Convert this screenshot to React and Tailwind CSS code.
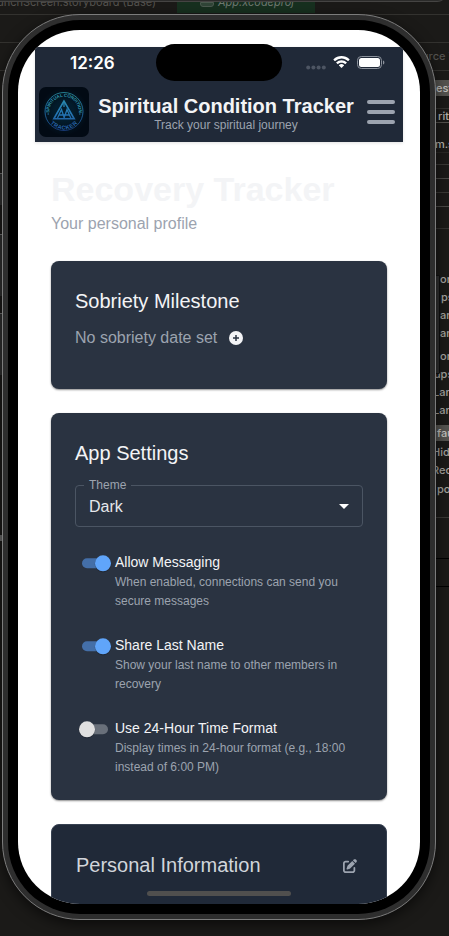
import { FaPenToSquare } from "react-icons/fa6";

const inspectorLines = [
  "top-[42px] bg-[#33322f]",
  "top-[70px] bg-[#33322f]",
  "top-[108px] bg-[#33322f]",
  "top-[122px] bg-[#55534f]",
  "top-[152px] bg-[#2a2926]",
  "top-[164px] bg-[#3a3936]",
  "top-[178px] bg-[#4a4946]",
  "top-[192px] bg-[#3a3936]",
  "top-[206px] bg-[#4a4946]",
  "top-[228px] bg-[#333230]",
  "top-[517px] bg-[#3a3936]",
  "top-[558px] bg-[#000000]",
  "top-[586px] bg-[#000000]",
];

const inspectorLabels = [
  ["urce T", "top-[48px] left-[422px] text-[#55534f]"],
  ["est", "top-[80px] left-[435px] w-[30px] bg-[#555450] pl-px text-[#c4c3c0]"],
  ["rit", "top-[108px] left-[438px] text-[#b5b4b0]"],
  ["m.s", "top-[136px] left-[435px] text-[#b5b4b0]"],
  ["on", "top-[271px] left-[440px] text-[#a5a4a0]"],
  ["ps", "top-[289px] left-[441px] text-[#a5a4a0]"],
  ["an", "top-[307px] left-[440px] text-[#a5a4a0]"],
  ["an", "top-[325px] left-[440px] text-[#a5a4a0]"],
  ["on", "top-[348px] left-[440px] text-[#a5a4a0]"],
  ["ups", "top-[366px] left-[434px] text-[#a5a4a0]"],
  ["Lan", "top-[384px] left-[433px] text-[#a5a4a0]"],
  ["Lan", "top-[402px] left-[433px] text-[#a5a4a0]"],
  ["fau", "top-[425px] left-[435px] w-[30px] bg-[#555450] pl-[2px] text-[#c4c3c0]"],
  ["Hid", "top-[444px] left-[432px] text-[#a5a4a0]"],
  ["Rec", "top-[462px] left-[432px] text-[#a5a4a0]"],
  ["po", "top-[481px] left-[437px] text-[#a5a4a0]"],
];

function Desktop() {
  return (
    <div className="absolute inset-0 overflow-hidden bg-[#1b1a18] font-['Inter',sans-serif]">
      {inspectorLines.map((c) => (
        <div key={c} className={`absolute right-0 h-px w-[60px] ${c}`} />
      ))}
      <div className="absolute top-[14px] left-0 h-px w-full bg-[#33322f]" />
      <div className="absolute top-[42px] left-0 h-px w-[40px] bg-[#33322f]" />
      <div className="absolute top-[70px] left-0 h-px w-[20px] bg-[#33322f]" />
      <div className="absolute top-0 left-[177px] h-[13px] w-[138px] bg-[#17301f]" />
      <div className="absolute top-[2px] left-[200px] h-[5px] w-[14px] rounded-b-[3px] border border-[#4b5a4f] bg-[#304537]" />
      <div className="absolute -top-[5px] -left-[9px] text-[11px] leading-[15px] whitespace-nowrap text-[#55534f]">
        aunchScreen.storyboard (Base)
      </div>
      <div className="absolute -top-[5px] left-[218px] text-[11px] leading-[15px] whitespace-nowrap text-[#6c776f] italic">App.xcodeproj</div>
      <div className="absolute -top-[8px] -left-[10px] h-[10px] w-[457px] rounded-b-[10px] border-b border-[#454443] bg-[#2b2b2a]" />
      {inspectorLabels.map(([t, c]) => (
        <div key={c} className={`absolute text-[11px] leading-[16px] font-medium whitespace-nowrap ${c}`}>
          {t}
        </div>
      ))}
      <div className="absolute top-[535px] left-0 h-[6px] w-[2px] bg-[#6b6b6b]" />
    </div>
  );
}

function HardwareButtons() {
  return (
    <>
      <div className="absolute top-[173px] left-0 h-[32px] w-[3px] border-t border-[#777] bg-[#303030]" />
      <div className="absolute top-[234px] left-0 h-[62px] w-[3px] border-t border-[#777] bg-[#303030]" />
      <div className="absolute top-[313px] left-0 h-[62px] w-[3px] border-t border-[#777] bg-[#303030]" />
      <div className="absolute top-[275px] left-[435px] h-[99px] w-[5px] rounded-r-[1px] border border-[#111] bg-[#303030]" />
    </>
  );
}

function StatusBar() {
  return (
    <div className="flex h-[32px] items-center justify-between pr-[18px] pl-[35px]">
      <span className="font-['Inter',sans-serif] text-[17px] leading-none font-semibold text-white">12:26</span>
      <div className="flex items-center">
        <svg width="20" height="5" viewBox="0 0 20 5" className="mt-[8px] mr-[7px]" fill="#4d5563">
          <circle cx="2.2" cy="2.5" r="2" />
          <circle cx="7.4" cy="2.5" r="2" />
          <circle cx="12.6" cy="2.5" r="2" />
          <circle cx="17.8" cy="2.5" r="2" />
        </svg>
        <svg width="17" height="13" viewBox="0 0 17 13" fill="white" className="mr-[7px] -mt-px">
          <path d="M8.5 2.6c2.4 0 4.6.9 6.3 2.5.1.1.3.1.5 0l1.2-1.3c.1-.1.1-.3 0-.5a11.6 11.6 0 0 0-16 0c-.1.2-.1.4 0 .5l1.2 1.3c.2.1.4.1.5 0a9.2 9.2 0 0 1 6.3-2.5z" />
          <path d="M8.5 6.7c1.3 0 2.6.5 3.5 1.4.2.1.4.1.5 0l1.2-1.3c.2-.1.2-.4 0-.5a7.5 7.5 0 0 0-10.4 0c-.2.1-.2.4 0 .5l1.2 1.3c.1.1.3.1.5 0 .9-.9 2.200-1.400 3.500-1.400z" />
          <path d="M10.900 9.600c.1-.2.1-.4 0-.5a3.800 3.800 0 0 0-4.800 0c-.1.100-.1.300 0 .5l2.100 2.200c.200.200.400.200.600 0z" />
        </svg>
        <svg width="28" height="13" viewBox="0 0 28 13" className="-mt-px">
          <rect x="0.5" y="0.500" width="24" height="12" rx="3.800" fill="none" stroke="#8b919b" />
          <rect x="2" y="2" width="21" height="9" rx="2.500" fill="white" />
          <path d="M26 4.500v4c.8-.3 1.400-1.100 1.400-2s-.6-1.700-1.400-2z" fill="#8b919b" />
        </svg>
      </div>
    </div>
  );
}

function Logo() {
  return (
    <div className="h-[50px] w-[50px] shrink-0 overflow-hidden rounded-[7px] bg-[#020a14]">
      <svg width="50" height="50" viewBox="0 0 50 50">
        <defs>
          <linearGradient id="neon" gradientUnits="userSpaceOnUse" x1="0" y1="5" x2="0" y2="44">
            <stop offset="0" stopColor="#2b94a8" />
            <stop offset="0.55" stopColor="#2476b4" />
            <stop offset="1" stopColor="#1b3f86" />
          </linearGradient>
          <radialGradient id="glow">
            <stop offset="0.4" stopColor="#031c2c" />
            <stop offset="1" stopColor="#020a14" />
          </radialGradient>
          <path id="upper" d="M10.300 24.500a14.700 14.700 0 0 1 29.400 0" />
          <path id="lower" d="M7 24.500a18 18 0 0 0 36 0" />
        </defs>
        <circle cx="25" cy="24.500" r="24" fill="url(#glow)" />
        <g fill="none" stroke="url(#neon)">
          <circle cx="25" cy="24.500" r="19" strokeWidth="0.800" />
          <path d="M25 14L14.800 31.800H35.200Z" strokeWidth="1.600" />
          <path d="M18.300 31.500l4.200-9 3 9M24.800 31.500l3.200-9 4 9M20.500 28h9.500M25 14v6" strokeWidth="1.300" />
        </g>
        <g fontFamily="Liberation Sans, sans-serif" fontWeight="700">
          <text fill="#2f93ac" fontSize="4.500" letterSpacing="-0.1" textAnchor="middle">
            <textPath href="#upper" startOffset="50%">SPIRITUAL CONDITION</textPath>
          </text>
          <text fill="#2763aa" fontSize="5.600" letterSpacing="0.5" textAnchor="middle">
            <textPath href="#lower" startOffset="50%">TRACKER</textPath>
          </text>
        </g>
        <circle cx="9.200" cy="27" r="0.800" fill="#246b98" />
        <circle cx="40.800" cy="27" r="0.800" fill="#246b98" />
      </svg>
    </div>
  );
}

function Header() {
  return (
    <header className="mx-[17px] mt-[17px] h-[95px] bg-[#202938] shadow-[0_1px_3px_rgba(0,0,0,0.12)]">
      <StatusBar />
      <div className="flex h-[63px] items-start pt-[8px] pl-[4px]">
        <Logo />
        <div className="flex w-[274px] flex-col items-center pt-[7px]">
          <h1 className="text-[20px] leading-[24px] font-bold whitespace-nowrap text-[#f3f4f6]">Spiritual Condition Tracker</h1>
          <p className="text-[12px] leading-[14px] whitespace-nowrap text-[#9ca3af]">Track your spiritual journey</p>
        </div>
        <div className="mt-[13px] ml-[4px] flex flex-col gap-[6px]">
          <span className="h-[4px] w-[28px] rounded-full bg-[#9ca3af]" />
          <span className="h-[4px] w-[28px] rounded-full bg-[#9ca3af]" />
          <span className="h-[4px] w-[28px] rounded-full bg-[#9ca3af]" />
        </div>
      </div>
    </header>
  );
}

function Toggle({ on }) {
  return (
    <svg width="40" height="24" viewBox="0 0 40 24" className="shrink-0">
      <rect x="7" y="7.300" width="26" height="10" rx="5" fill={on ? "#446fa8" : "#69707a"} />
      <circle cx={on ? 28 : 12} cy="13.200" r="8.300" fill="#000" opacity="0.2" />
      <circle cx={on ? 28 : 12} cy="12.300" r="8" fill={on ? "#60a5fa" : "#e0e0e0"} />
    </svg>
  );
}

const settings = [
  { title: "Allow Messaging", lines: ["When enabled, connections can send you", "secure messages"], on: true },
  { title: "Share Last Name", lines: ["Show your last name to other members in", "recovery"], on: true },
  { title: "Use 24-Hour Time Format", lines: ["Display times in 24-hour format (e.g., 18:00", "instead of 6:00 PM)"], on: false },
];

function Setting({ title, lines, on }) {
  return (
    <div className="flex h-[83px]">
      <Toggle on={on} />
      <div>
        <div className="text-[14px] leading-[22px] whitespace-nowrap text-[#f3f4f6]">{title}</div>
        {lines.map((line) => (
          <div key={line} className="text-[12px] leading-[19px] whitespace-nowrap text-[#9ca3af]">
            {line}
          </div>
        ))}
      </div>
    </div>
  );
}

function Profile() {
  return (
    <main className="px-[33px]">
      <h2 className="mt-[26px] text-[34px] leading-[42px] font-bold whitespace-nowrap text-[#f3f4f6]">Recovery Tracker</h2>
      <p className="mt-[3px] text-[16px] leading-[22px] whitespace-nowrap text-[#9ca3af]">Your personal profile</p>

      <section className="mt-[26px] h-[128px] rounded-[8px] bg-[#2a3341] px-[24px] pt-[26px] shadow-[0_1px_2px_rgba(0,0,0,0.45)]">
        <h3 className="text-[20px] leading-[28px] whitespace-nowrap text-[#f3f4f6]">Sobriety Milestone</h3>
        <div className="mt-[11px] flex items-center">
          <span className="text-[16px] leading-[24px] whitespace-nowrap text-[#9ca3af]">No sobriety date set</span>
          <svg width="14" height="14" viewBox="0 0 14 14" className="ml-[12px]">
            <circle cx="7" cy="7" r="7" fill="#f3f4f6" />
            <path d="M7 4v6M4 7h6" stroke="#2a3341" strokeWidth="1.500" />
          </svg>
        </div>
      </section>

      <section className="mt-[24px] h-[387px] rounded-[8px] bg-[#2a3341] px-[24px] pt-[26px] shadow-[0_1px_2px_rgba(0,0,0,0.45)]">
        <h3 className="text-[20px] leading-[28px] whitespace-nowrap text-[#f3f4f6]">App Settings</h3>
        <fieldset className="mt-[10px] h-[50px] rounded-[4px] border border-[#4b5563] px-[8px]">
          <legend className="px-[5px] text-[12px] leading-[16px] text-[#9ca3af]">Theme</legend>
          <div className="flex items-center justify-between px-[5px] pt-[2px]">
            <span className="pt-px text-[16px] leading-[22px] text-[#e5e7eb]">Dark</span>
            <svg width="10" height="5" viewBox="0 0 10 5">
              <path d="M0 0h10L5 5z" fill="white" />
            </svg>
          </div>
        </fieldset>
        <div className="pt-[24px]">
          {settings.map((s) => (
            <Setting key={s.title} {...s} />
          ))}
        </div>
      </section>

      <section className="mt-[24px] flex h-[100px] items-start justify-between rounded-t-[8px] border border-[#374151] bg-[#202938] px-[24px] pt-[26px]">
        <h3 className="text-[20px] leading-[28px] whitespace-nowrap text-[#d1d5db]">Personal Information</h3>
        <FaPenToSquare className="mt-[8px] mr-[5px] h-[14px] w-[14px] text-[#9ca3af]" />
      </section>
    </main>
  );
}

export default function App() {
  return (
    <div className="relative h-[936px] w-[449px] overflow-hidden font-['Liberation_Sans',Arial,sans-serif]">
      <Desktop />
      <HardwareButtons />
      <div className="relative mt-[14px] ml-[2px] h-[906px] w-[434px] rounded-[78px] border border-[#7c7c7c] bg-[#2e2e2e] p-[5px] shadow-[0_4px_14px_rgba(0,0,0,0.6)]">
        <div className="h-[894px] w-[422px] rounded-[72px] bg-black p-[10px]">
          <div className="relative h-[874px] w-[402px] overflow-hidden rounded-[62px] bg-white">
            <div className="flow-root">
              <Header />
              <Profile />
            </div>
            <div className="absolute top-[14px] left-[138px] h-[37px] w-[126px] rounded-full bg-black" />
            <div className="absolute bottom-[8px] left-[129px] h-[5px] w-[144px] rounded-full bg-[#504f4e]" />
          </div>
        </div>
      </div>
    </div>
  );
}
